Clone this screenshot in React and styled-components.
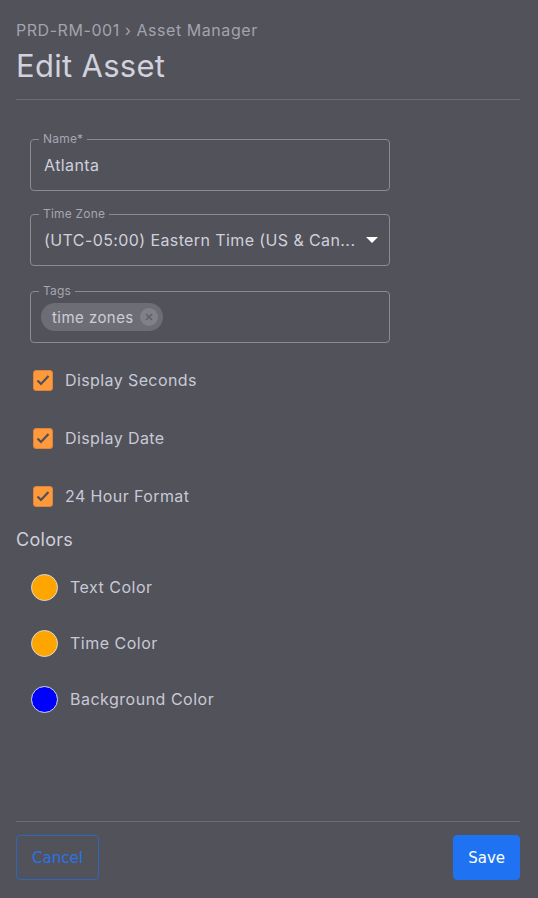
import React from "react";
import styled, { createGlobalStyle } from "styled-components";

const GlobalStyle = createGlobalStyle`
  html, body {
    margin: 0;
    padding: 0;
    background: #51525a;
  }
  * { box-sizing: border-box; }
`;

const Page = styled.div`
  height: 898px;
  display: flex;
  flex-direction: column;
  padding: 0 18px 0 16px;
  font-family: Inter, "Open Sans", sans-serif;
  color: #c9c9d6;
`;

const Breadcrumb = styled.div`
  margin-top: 20px;
  font-size: 16px;
  line-height: 20px;
  letter-spacing: 0.55px;
  color: #a3a3ae;
`;

const Title = styled.h1`
  margin: 6px 0 0;
  font-size: 31px;
  font-weight: 400;
  line-height: 40px;
  letter-spacing: 0.3px;
  color: #d2d2de;
`;

const Divider = styled.hr`
  margin: ${(p) => p.$top || 0}px 0 0;
  border: 0;
  border-top: 1px solid #6c6d73;
`;

const Form = styled.div`
  display: flex;
  flex-direction: column;
  padding: 39px 0 0 14px;
`;

const Field = styled.div`
  width: 360px;
  height: 52px;
  margin-bottom: ${(p) => p.$mb || 0}px;
  padding: 0 12px 0 13px;
  border: 1px solid #8b8c93;
  border-radius: 4px;
  display: flex;
  align-items: center;
  position: relative;
`;

const Label = styled.span`
  position: absolute;
  top: -8px;
  left: 8px;
  padding: 0 4px;
  background: #51525a;
  font-size: 12px;
  line-height: 14px;
  letter-spacing: 0.2px;
  color: #a6a6b2;
`;

const Value = styled.div`
  flex: 1;
  font-size: 16px;
  letter-spacing: 0.4px;
  color: #d0d0dc;
  white-space: nowrap;
`;

const Arrow = styled.div`
  width: 0;
  height: 0;
  border-left: 6px solid transparent;
  border-right: 6px solid transparent;
  border-top: 6px solid #ffffff;
  margin-right: -1px;
`;

const Chip = styled.div`
  display: flex;
  align-items: center;
  gap: 6px;
  height: 28px;
  padding: 0 5px 0 11px;
  margin-left: -3px;
  border-radius: 14px;
  background: #6d6e75;
  font-size: 15px;
  letter-spacing: 0.45px;
  color: #cdcdd8;
`;

const ChipClose = styled.div`
  width: 18px;
  height: 18px;
  border-radius: 50%;
  background: #808188;
  display: flex;
  align-items: center;
  justify-content: center;
`;

const CheckList = styled.div`
  margin-top: 8px;
  display: flex;
  flex-direction: column;
`;

const CheckRow = styled.label`
  display: flex;
  align-items: center;
  gap: 12px;
  height: 58px;
  margin-left: 3px;
  font-size: 16px;
  letter-spacing: 0.4px;
  color: #c9c9d6;
`;

const Box = styled.span`
  width: 20px;
  height: 21px;
  border-radius: 3px;
  background: #ff9a3c;
  border: 1px solid #e0833a;
  display: flex;
  align-items: center;
  justify-content: center;
`;

const SectionTitle = styled.div`
  margin-top: 3px;
  font-size: 18px;
  line-height: 24px;
  letter-spacing: 0.3px;
  color: #cfcfdb;
`;

const ColorList = styled.div`
  display: flex;
  flex-direction: column;
  padding-left: 15px;
  margin-top: 7px;
`;

const ColorRow = styled.div`
  display: flex;
  align-items: center;
  gap: 12px;
  height: 56px;
  font-size: 16px;
  letter-spacing: 0.5px;
  color: #c9c9d6;
`;

const Swatch = styled.span`
  width: 27px;
  height: 27px;
  border-radius: 50%;
  background: ${(p) => p.$color};
  border: 1px solid #d8d8de;
`;

const Footer = styled.div`
  margin-top: auto;
  padding-bottom: 18px;
`;

const Buttons = styled.div`
  display: flex;
  justify-content: space-between;
  margin-top: 13px;
`;

const Button = styled.button`
  height: 45px;
  padding: 0 ${(p) => (p.$primary ? 14 : 15)}px;
  border-radius: 4px;
  font-family: "DejaVu Sans", Verdana, sans-serif;
  font-size: 15px;
  border: 1px solid ${(p) => (p.$primary ? "#1f73f2" : "#2f66b8")};
  background: ${(p) => (p.$primary ? "#1f73f2" : "transparent")};
  color: ${(p) => (p.$primary ? "#ffffff" : "#2a74e6")};
`;

const Check = () => (
  <svg width="14" height="12" viewBox="0 0 14 12">
    <path d="M1.5 6.5 L5 10 L12.5 2" fill="none" stroke="#4f5058" strokeWidth="2.2" />
  </svg>
);

const Close = () => (
  <svg width="8" height="8" viewBox="0 0 8 8">
    <path d="M1 1 L7 7 M7 1 L1 7" stroke="#5f6067" strokeWidth="1.5" />
  </svg>
);

const checks = ["Display Seconds", "Display Date", "24 Hour Format"];
const colors = [
  { label: "Text Color", color: "#ffa500" },
  { label: "Time Color", color: "#ffa500" },
  { label: "Background Color", color: "#0000ff" },
];

export default function App() {
  return (
    <>
      <GlobalStyle />
      <Page>
        <Breadcrumb>PRD-RM-001 › Asset Manager</Breadcrumb>
        <Title>Edit Asset</Title>
        <Divider $top={13} />
        <Form>
          <Field $mb={23}>
            <Label>Name*</Label>
            <Value>Atlanta</Value>
          </Field>
          <Field $mb={25}>
            <Label>Time Zone</Label>
            <Value>(UTC-05:00) Eastern Time (US &amp; Can...</Value>
            <Arrow />
          </Field>
          <Field>
            <Label>Tags</Label>
            <Chip>
              time zones
              <ChipClose>
                <Close />
              </ChipClose>
            </Chip>
          </Field>
          <CheckList>
            {checks.map((c) => (
              <CheckRow key={c}>
                <Box>
                  <Check />
                </Box>
                {c}
              </CheckRow>
            ))}
          </CheckList>
        </Form>
        <SectionTitle>Colors</SectionTitle>
        <ColorList>
          {colors.map((c) => (
            <ColorRow key={c.label}>
              <Swatch $color={c.color} />
              {c.label}
            </ColorRow>
          ))}
        </ColorList>
        <Footer>
          <Divider />
          <Buttons>
            <Button>Cancel</Button>
            <Button $primary>Save</Button>
          </Buttons>
        </Footer>
      </Page>
    </>
  );
}
